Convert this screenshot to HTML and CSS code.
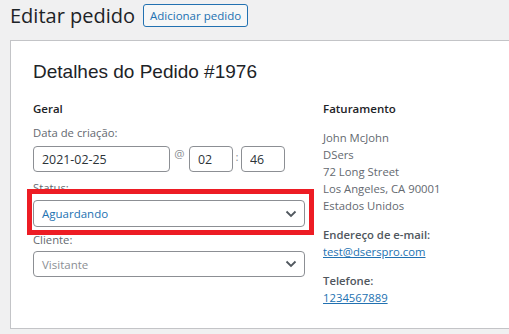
FILE: index.html
```html
<!DOCTYPE html>
<html lang="pt-BR">
<head>
<meta charset="utf-8">
<title>Editar pedido</title>
<link rel="stylesheet" href="styles.css">
</head>
<body>
<div class="wrap">
  <div class="page-head">
    <h1 class="page-title">Editar pedido</h1>
    <a class="title-action" href="#">Adicionar pedido</a>
  </div>
  <div class="panel">
    <h2 class="order-title">Detalhes do Pedido #1976</h2>
    <div class="columns">
      <div class="col col-general">
        <h3 class="col-title">Geral</h3>
        <div class="field field-date">
          <label class="field-label">Data de criação:</label>
          <div class="date-row">
            <input class="text-input date-input" type="text" value="2021-02-25">
            <span class="sep sep-at">@</span>
            <input class="text-input time-input" type="text" value="02">
            <span class="sep sep-colon">:</span>
            <input class="text-input time-input" type="text" value="46">
          </div>
        </div>
        <div class="field field-status">
          <label class="field-label">Status:</label>
          <div class="select select-status">
            <span class="select-value value-blue">Aguardando</span>
            <svg class="chevron" width="12" height="8" viewBox="0 0 12 8"><path d="M1.5 1.5 L6 6 L10.5 1.5" fill="none" stroke="#50575e" stroke-width="1.8"/></svg>
          </div>
          <div class="highlight"></div>
        </div>
        <div class="field field-client">
          <label class="field-label">Cliente:</label>
          <div class="select select-client">
            <span class="select-value value-muted">Visitante</span>
            <svg class="chevron" width="12" height="8" viewBox="0 0 12 8"><path d="M1.5 1.5 L6 6 L10.5 1.5" fill="none" stroke="#50575e" stroke-width="1.8"/></svg>
          </div>
        </div>
      </div>
      <div class="col col-billing">
        <h3 class="col-title">Faturamento</h3>
        <p class="address">John McJohn<br>DSers<br>72 Long Street<br>Los Angeles, CA 90001<br>Estados Unidos</p>
        <p class="contact"><strong class="contact-label">Endereço de e-mail:</strong><br><a class="contact-link" href="#">test@dserspro.com</a></p>
        <p class="contact"><strong class="contact-label">Telefone:</strong><br><a class="contact-link" href="#">1234567889</a></p>
      </div>
    </div>
  </div>
</div>
</body>
</html>
```

FILE: styles.css
```css
html, body {
  margin: 0;
  padding: 0;
}
body {
  background: #f0f0f1;
  font-family: "Open Sans", "Noto Sans", sans-serif;
  font-size: 11.3px;
  color: #3c434a;
  overflow: hidden;
  width: 509px;
  height: 334px;
}
.wrap {
  padding-left: 10px;
}
.page-head {
  display: flex;
  align-items: center;
  height: 31px;
}
.page-title {
  margin: 0;
  font-size: 20px;
  font-weight: 400;
  color: #1d2327;
  line-height: 28px;
}
.title-action {
  margin-left: 8px;
  display: inline-block;
  border: 1px solid #2271b1;
  border-radius: 3px;
  background: #f6f7f7;
  color: #2271b1;
  text-decoration: none;
  font-size: 11.5px;
  line-height: 21px;
  padding: 0 6px;
}
.panel {
  margin-top: 9px;
  background: #fff;
  border: 1px solid #c3c4c7;
  border-right: none;
  padding: 18px 0 22px 22px;
}
.order-title {
  margin: 0;
  font-family: "Liberation Sans", Arial, sans-serif;
  font-size: 19px;
  font-weight: 400;
  line-height: 25px;
  color: #1d2327;
}
.columns {
  display: grid;
  grid-template-columns: 272px 1fr;
  column-gap: 18px;
  margin-top: 16px;
}
.col-title {
  margin: 0;
  font-size: 11.5px;
  font-weight: 600;
  line-height: 18px;
  color: #1d2327;
}
.field {
  position: relative;
}
.field-label {
  display: block;
  line-height: 16px;
  color: #646970;
}
.field-date { margin-top: 7px; }
.field-status { margin-top: 8px; }
.field-client { margin-top: 5px; }
.date-row {
  display: flex;
  align-items: flex-start;
  margin-top: 5px;
}
.text-input {
  box-sizing: border-box;
  height: 26px;
  border: 1px solid #8c8f94;
  border-radius: 4px;
  padding: 0 8px;
  font-family: inherit;
  font-size: 12.4px;
  color: #2c3338;
  background: #fff;
  margin: 0;
}
.date-input { width: 137px; }
.time-input { width: 44px; }
.sep {
  color: #8c8f94;
  font-size: 11.5px;
  line-height: 16px;
}
.sep-at { width: 19px; text-align: center; }
.sep-colon { width: 8px; text-align: center; margin-top: 3px; }
.select {
  box-sizing: border-box;
  display: flex;
  align-items: center;
  justify-content: space-between;
  border: 1px solid #8c8f94;
  border-radius: 4px;
  padding: 0 7px 0 8px;
  background: #fff;
}
.select-status { height: 27px; margin-top: 4px; }
.select-client { height: 26px; margin-top: 3px; }
.select-value { font-size: 11.5px; }
.value-blue { color: #2271b1; }
.value-muted { color: #8c8f94; }
.chevron { display: block; }
.highlight {
  position: absolute;
  left: -6px;
  right: -9px;
  top: 9px;
  height: 46px;
  box-sizing: border-box;
  border: 5px solid #ed1c24;
  pointer-events: none;
}
.address {
  margin: 11px 0 0;
  line-height: 17px;
  color: #646970;
}
.contact {
  margin: 12px 0 0;
  line-height: 17px;
}
.contact-label {
  font-weight: 600;
  color: #50575e;
}
.contact-link {
  color: #2271b1;
}
```
